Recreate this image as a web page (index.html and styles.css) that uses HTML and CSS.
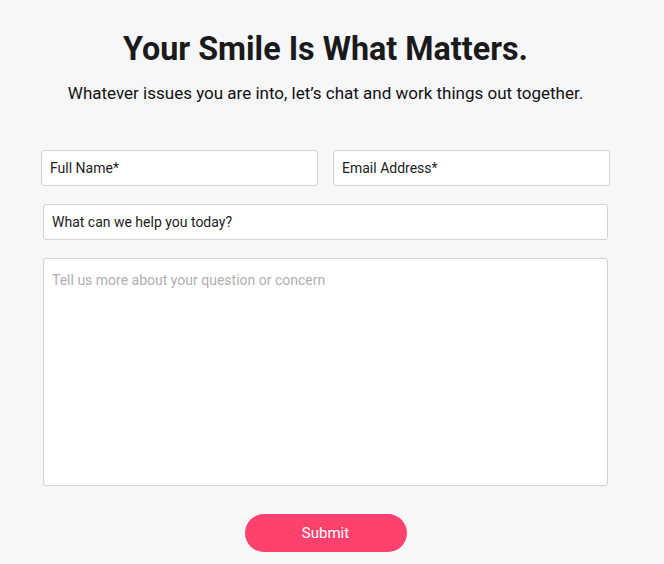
FILE: index.html
```html
<!DOCTYPE html>
<html lang="en">
<head>
  <meta charset="UTF-8">
  <meta name="viewport" content="width=device-width, initial-scale=1.0">
  <title>Contact Us</title>
  <link rel="stylesheet" href="styles.css">
</head>
<body>
  <div class="contact-page">
    <!-- Header -->
    <div class="contact-header">
      <h1 class="contact-title">Your Smile Is What Matters.</h1>
      <p class="contact-subtitle">Whatever issues you are into, let’s chat and work things out together.</p>
    </div>

    <!-- Form -->
    <form class="contact-form">
      <div class="form-row">
        <input class="form-field" type="text" value="Full Name*">
        <input class="form-field" type="email" value="Email Address*">
      </div>
      <input class="form-field subject-field" type="text" value="What can we help you today?">
      <textarea class="form-field message-field" placeholder="Tell us more about your question or concern"></textarea>
      <button class="submit-btn" type="button">Submit</button>
    </form>
  </div>
</body>
</html>
```

FILE: styles.css
```css
:root {
  --page-bg: #f6f7f9;
  --text-dark: #1c1c1c;
  --field-border: #d3d3d3;
  --placeholder: #b0b0b0;
  --accent-pink: #ff426d;
}

body, html {
  margin: 0;
  padding: 0;
  background-color: var(--page-bg);
  font-family: Roboto, "Liberation Sans", sans-serif;
  color: var(--text-dark);
}

/* Page wrapper */
.contact-page {
  width: 651px;
  padding-top: 30px;
  box-sizing: border-box;
}

/* Header */
.contact-header {
  text-align: center;
}

.contact-title {
  margin: 0;
  font-size: 32.3px;
  line-height: 38px;
  font-weight: 700;
  color: #1a1a1a;
}

.contact-subtitle {
  margin: 13px 0 0;
  font-size: 17px;
  line-height: 24px;
  color: #111;
}

/* Form */
.contact-form {
  width: 565px;
  margin: 45px auto 0;
  display: flex;
  flex-direction: column;
  gap: 18px;
}

.form-row {
  display: flex;
  gap: 15px;
  margin: 0 -2px;
}

.form-field {
  display: block;
  box-sizing: border-box;
  width: 100%;
  height: 36px;
  padding: 0 8px;
  background: #fff;
  border: 1px solid var(--field-border);
  border-radius: 3px;
  font-family: Roboto, "Liberation Sans", sans-serif;
  font-size: 14px;
  color: #222;
  outline: none;
}

.form-row .form-field {
  flex: 1;
}

.message-field {
  height: 228px;
  padding: 12px 8px;
  resize: none;
  line-height: 18px;
}

.message-field::placeholder {
  color: var(--placeholder);
}

.submit-btn {
  align-self: center;
  margin-top: 10px;
  width: 162px;
  height: 38px;
  border: none;
  border-radius: 19px;
  background: var(--accent-pink);
  color: #fff;
  font-family: Roboto, "Liberation Sans", sans-serif;
  font-size: 15px;
  cursor: pointer;
}
```
